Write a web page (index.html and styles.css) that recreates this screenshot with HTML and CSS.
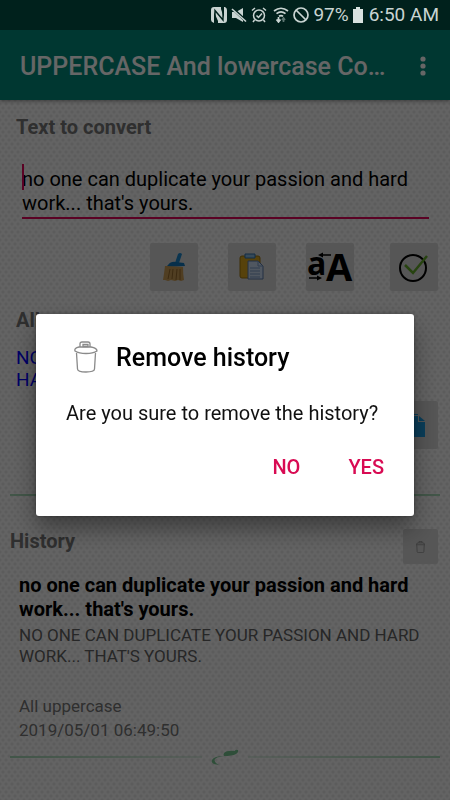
FILE: index.html
```html
<!DOCTYPE html>
<html lang="en">
<head>
    <meta charset="UTF-8">
    <meta name="viewport" content="width=device-width, initial-scale=1.0">
    <title>UPPERCASE And lowercase Converter</title>
    <link rel="stylesheet" href="styles.css">
</head>
<body>
    <div class="status-bar">
        <svg class="status-icon" width="16" height="16" viewBox="0 0 16 16">
            <path d="M3 0h7v2l3 9V0h1q2 1 2 3v10q0 3-3 3H7v-2L3 5v11q-3-1-3-3V3q0-3 3-3z" fill="#c9d4d2"/>
            <path d="M4 13V3.500L12 13V3" fill="none" stroke="#00211c" stroke-width="1.400"/>
        </svg>
        <svg class="status-icon" width="16" height="16" viewBox="0 0 16 16">
            <path d="M1 5h4l7-4v14l-7-4H1z" fill="#c9d4d2"/>
            <path d="M1 1l14 13" stroke="#00211c" stroke-width="3"/>
            <path d="M1 2l14 12.500" stroke="#c9d4d2" stroke-width="1.600"/>
        </svg>
        <svg class="status-icon" width="16" height="16" viewBox="0 0 16 16" fill="none" stroke="#c9d4d2" stroke-width="1.500">
            <circle cx="8" cy="8.500" r="5.500"/>
            <path d="M1 3.500L4 1M15 3.500L12 1M3.500 13L2 15M12.500 13L14 15M5.500 8.500l2 2 3.500-4"/>
        </svg>
        <svg class="status-icon status-wifi" width="16" height="16" viewBox="0 0 16 16" fill="none" stroke="#c9d4d2" stroke-width="1.700">
            <path d="M1 4q7-5.500 14 0M3.500 6.700q4.500-3.500 9 0M6 9.300q2-1.500 4 0"/>
            <path d="M5.500 10v4M3.500 12.500L5.500 15l2-2.500"/>
            <path d="M10.500 15v-4M9 13l1.500-2 1.500 2" stroke="#5c7571"/>
        </svg>
        <svg class="status-icon" width="16" height="16" viewBox="0 0 16 16" fill="none" stroke="#c9d4d2" stroke-width="1.700">
            <circle cx="8" cy="8" r="7"/>
            <path d="M3 3l10 10"/>
        </svg>
        <span class="battery-text">97%</span>
        <svg class="battery-icon" width="10" height="16" viewBox="0 0 10 16">
            <path d="M3 0h4v2h3v14H0V2h3z" fill="#d9e2e0"/>
        </svg>
        <span class="clock">6:50 AM</span>
    </div>

    <header class="app-bar">
        <h1 class="app-title">UPPERCASE And lowercase Converter</h1>
        <button class="menu-btn" type="button" aria-label="More options">
            <svg width="6" height="22" viewBox="0 0 6 22" fill="#fff">
                <circle cx="3" cy="3" r="2.600"/>
                <circle cx="3" cy="10" r="2.600"/>
                <circle cx="3" cy="17" r="2.600"/>
            </svg>
        </button>
    </header>

    <main class="content">
        <section class="convert">
            <label class="section-title" for="sourceText">Text to convert</label>
            <div class="text-field">
                <textarea id="sourceText" class="text-input" rows="2">no one can duplicate your passion and hard work... that's yours.</textarea>
            </div>
            <div class="toolbar">
                <button class="tool-btn" type="button" aria-label="Clear">
                    <svg width="28" height="30" viewBox="0 0 28 30">
                        <path d="M18 2q2-2 4 0l-3 9h-4z" fill="#1c86c9"/>
                        <path d="M8 13q3-4 8-3l8 1 1 3-19 1z" fill="#1277b8"/>
                        <path d="M7 14l16 1q0 8 1 13l-3 1-3-1-3 1-4-1-3 1-3-1-2 0q1-6 2-14z" fill="#c99b55"/>
                        <path d="M10 17l-2 10M13 17l-1 10M17 17l-1 11M20 17v11" stroke="#94692c" fill="none"/>
                    </svg>
                </button>
                <button class="tool-btn" type="button" aria-label="Paste">
                    <svg width="26" height="28" viewBox="0 0 26 28">
                        <rect x="1" y="3" width="20" height="22" rx="2" fill="#d9a51c" stroke="#9c7510"/>
                        <path d="M6 1h10v4H6z" fill="#88b8df" stroke="#2f6eaa"/>
                        <path d="M9 8h10l5 5v13H9z" fill="#c9daf0" stroke="#5878a8"/>
                        <path d="M19 8v5h5M11 15h10M11 18h10M11 21h10M11 24h10" fill="none" stroke="#7897c4"/>
                    </svg>
                </button>
                <button class="tool-btn" type="button" aria-label="Change case">
                    <svg class="case-icon" width="48" height="48" viewBox="0 0 48 48">
                        <text class="case-small" x="1" y="32">a</text>
                        <text class="case-big" x="20" y="38">A</text>
                        <path d="M16 12h9M3 35h8" stroke="#000" stroke-width="1.500"/>
                        <path d="M12 12l5-2.500v5zM16 35l-5-2.500v5z"/>
                    </svg>
                </button>
                <button class="tool-btn apply-btn" type="button" aria-label="Convert">
                    <svg width="30" height="30" viewBox="0 0 30 30" fill="none">
                        <circle cx="14" cy="16" r="13" stroke="#000" stroke-width="2"/>
                        <path d="M6 13l8 8L28 4" stroke="#62a82a" stroke-width="2.500"/>
                    </svg>
                </button>
            </div>
        </section>

        <section class="result">
            <h2 class="section-title">All uppercase</h2>
            <p class="result-text">NO ONE CAN DUPLICATE YOUR PASSION AND HARD WORK... THAT'S YOURS.</p>
            <div class="result-actions">
                <button class="tool-btn" type="button" aria-label="Copy">
                    <svg width="24" height="24" viewBox="0 0 24 24" fill="#1a9be0">
                        <path d="M3 1h13v1H4v18H3z"/>
                        <path d="M6 3h10v6h7v15H6z"/>
                        <path d="M17 3l6 5h-6z"/>
                    </svg>
                </button>
            </div>
        </section>

        <hr class="divider">

        <section class="history">
            <div class="history-head">
                <h2 class="section-title">History</h2>
                <button class="trash-btn" type="button" aria-label="Remove history">
                    <svg width="9" height="12" viewBox="0 0 24 32" fill="none" stroke="#8a8a8a" stroke-width="2">
                        <path d="M8 5V1h8v4M1 10q0-5 5-5h12q5 0 5 5zM2 10l1 18q0 3 4 3h10q4 0 4-3l1-18"/>
                    </svg>
                </button>
            </div>
            <article class="history-item">
                <p class="history-source">no one can duplicate your passion and hard work... that's yours.</p>
                <p class="history-result">NO ONE CAN DUPLICATE YOUR PASSION AND HARD WORK... THAT'S YOURS.</p>
                <p class="history-meta">All uppercase<br><time datetime="2019-05-01T06:49:50">2019/05/01 06:49:50</time></p>
            </article>
            <div class="ornament">
                <span class="ornament-line"></span>
                <svg width="30" height="18" viewBox="0 0 30 18">
                    <path d="M14 5Q17 2 25 3Q25 1 28 2Q29 4 26 6Q22 8 14 8Q13 7 14 5Z" fill="#76c490"/>
                    <path d="M14 8Q5 9 4.500 12Q4.500 15 9 17Q0 16 2 12Q4 8 14 8Z" fill="#76c490"/>
                </svg>
                <span class="ornament-line"></span>
            </div>
        </section>
    </main>

    <!-- Confirmation dialog -->
    <div class="overlay">
        <div class="dialog" role="alertdialog" aria-labelledby="dialogTitle" aria-describedby="dialogText">
            <div class="dialog-head">
                <svg width="24" height="34" viewBox="0 0 24 34" fill="none" stroke="#8a8a8a" stroke-width="1.300">
                    <path d="M6 6V3q0-2 2-2h6q2 0 2 2v3M9 3.500h5v2H9z"/>
                    <path d="M1 10Q0 7 5 6h12q6 1 6 4Q19 12.500 12 12.500T1 10zM2.500 12l1 16q0 3 8.500 3t8.500-3l1-16"/>
                </svg>
                <h2 class="dialog-title" id="dialogTitle">Remove history</h2>
            </div>
            <p class="dialog-text" id="dialogText">Are you sure to remove the history?</p>
            <div class="dialog-actions">
                <button class="dialog-btn" type="button">NO</button>
                <button class="dialog-btn" type="button">YES</button>
            </div>
        </div>
    </div>
</body>
</html>
```

FILE: styles.css
```css
* {
    box-sizing: border-box;
}
body {
    margin: 0;
    min-height: 100vh;
    font-family: Roboto, sans-serif;
    font-size: 20px;
    line-height: 24px;
    background-color: #f8f8f8;
    background-image: radial-gradient(circle, #e6e6e6 1px, transparent 2px),
        radial-gradient(circle, #e6e6e6 1px, transparent 2px);
    background-size: 6px 8px;
    background-position: 0 0, 3px 4px;
}
h1, h2, p {
    margin: 0;
}
button {
    padding: 0;
    border: none;
    font-family: inherit;
    cursor: pointer;
}
.status-bar {
    position: relative;
    z-index: 2;
    display: flex;
    align-items: center;
    justify-content: flex-end;
    gap: 4px;
    height: 30px;
    padding-right: 11px;
    background-color: #00211c;
    font-size: 19px;
    color: #c9d4d2;
}
.status-wifi {
    margin-left: 2px;
}
.battery-icon {
    margin-right: 2px;
}
.app-bar {
    display: flex;
    align-items: center;
    justify-content: space-between;
    gap: 24px;
    height: 70px;
    padding: 3px 24px 0 20px;
    background-color: #00897b;
    color: #fff;
    box-shadow: 0 1px 4px rgba(0,0,0,0.4);
}
.app-title {
    overflow: hidden;
    font-size: 25px;
    font-weight: 500;
    line-height: 32px;
    white-space: nowrap;
    text-overflow: ellipsis;
}
.menu-btn {
    flex: none;
    display: flex;
    background: none;
}
.content {
    padding: 15px 10px 20px;
}
.convert, .result {
    padding: 0 2px 0 6px;
}
.section-title {
    display: block;
    font-size: 20px;
    font-weight: 700;
    line-height: 24px;
    color: #757575;
}
.text-field {
    position: relative;
    margin: 28px 9px 24px 6px;
    border-bottom: 2px solid #e0055a;
}
.text-field::before {
    content: "";
    position: absolute;
    top: -3px;
    left: 0;
    width: 2px;
    height: 26px;
    background-color: #e0055a;
}
.text-input {
    display: block;
    width: 100%;
    height: 50px;
    padding: 0;
    border: none;
    outline: none;
    resize: none;
    overflow: hidden;
    background: none;
    font-family: inherit;
    font-size: 20px;
    line-height: 24px;
    color: #000;
}
.toolbar {
    display: flex;
    justify-content: flex-end;
    gap: 30px;
}
.tool-btn {
    display: flex;
    align-items: center;
    justify-content: center;
    width: 48px;
    height: 48px;
    border-radius: 2px;
    background-color: #d6d6d6;
}
.case-icon {
    font-family: "Open Sans", sans-serif;
    font-weight: 700;
}
.case-small {
    font-size: 32px;
}
.case-big {
    font-size: 38px;
}
.apply-btn {
    margin-left: 6px;
}
.result {
    margin-top: 17px;
}
.result-text {
    margin-top: 15px;
    font-size: 19px;
    line-height: 22px;
    color: #0000ff;
}
.result-actions {
    display: flex;
    justify-content: flex-end;
    margin-top: 10px;
}
.divider {
    height: 2px;
    margin: 45px 0 0;
    border: none;
    background-color: #a5d6b5;
}
.history-head {
    display: flex;
    justify-content: space-between;
    margin-top: 33px;
    padding-right: 2px;
}
.trash-btn {
    display: flex;
    align-items: center;
    justify-content: center;
    width: 35px;
    height: 35px;
    border-radius: 2px;
    background-color: #d6d6d6;
}
.history-item {
    padding: 9px 0 0 9px;
}
.history-source {
    font-weight: 700;
}
.history-result {
    margin-top: 4px;
    font-size: 17px;
    line-height: 21px;
    color: #616161;
}
.history-meta {
    margin-top: 27px;
    font-size: 17px;
    color: #757575;
}
.ornament {
    display: flex;
    align-items: center;
    gap: 8px;
    margin-top: 6px;
}
.ornament-line {
    flex: 1;
    height: 2px;
    background: linear-gradient(to right, #a5d6b5, rgba(165,214,181,0.3));
}
.ornament-line:last-child {
    background: linear-gradient(to left, #a5d6b5, rgba(165,214,181,0.3));
}
.overlay {
    position: fixed;
    z-index: 1;
    inset: 0;
    display: flex;
    align-items: center;
    justify-content: center;
    padding: 30px 36px 0;
    background-color: rgba(0,0,0,0.6);
}
.dialog {
    width: 100%;
    max-width: 560px;
    padding: 27px 16px 27px 30px;
    border-radius: 3px;
    background-color: #fff;
    box-shadow: 0 12px 24px rgba(0,0,0,0.4), 0 0 4px rgba(0,0,0,0.3);
}
.dialog-head {
    display: flex;
    align-items: center;
    gap: 18px;
    padding-left: 8px;
}
.dialog-title {
    font-size: 25px;
    font-weight: 500;
    line-height: 34px;
    color: #000;
}
.dialog-text {
    margin-top: 26px;
    color: #111;
}
.dialog-actions {
    display: flex;
    justify-content: flex-end;
    gap: 20px;
    margin-top: 19px;
}
.dialog-btn {
    height: 45px;
    padding: 0 14px;
    background: none;
    font-size: 20px;
    font-weight: 500;
    color: #d80b53;
}
```
